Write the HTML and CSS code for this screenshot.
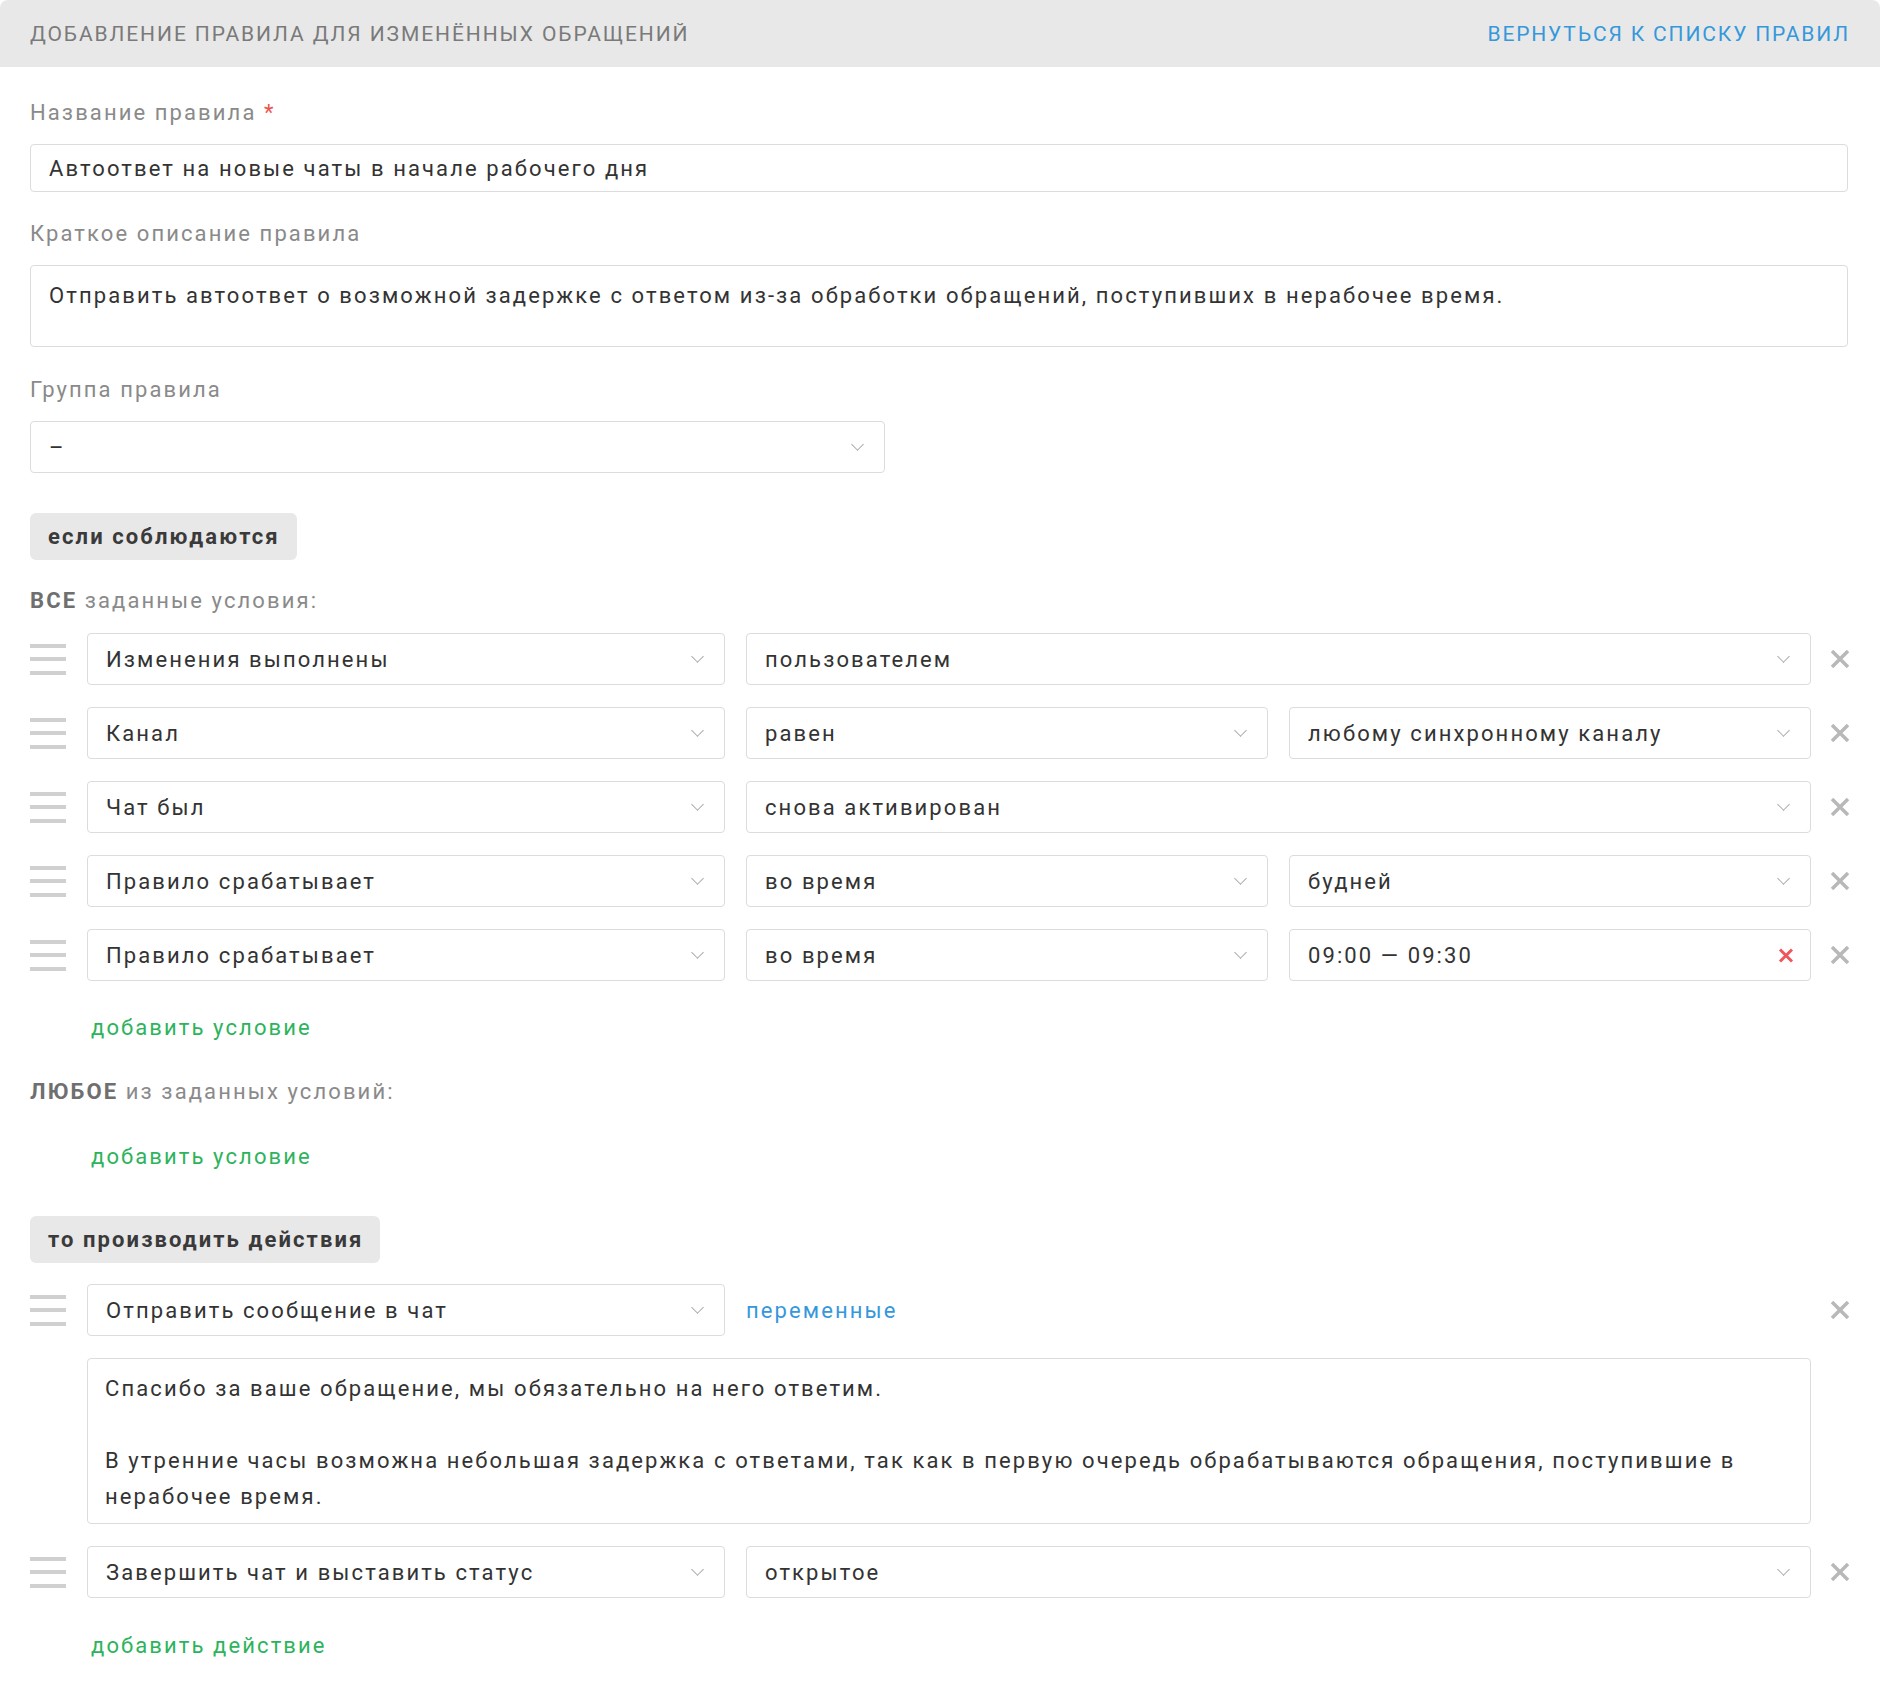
FILE: index.html
```html
<!DOCTYPE html>
<html lang="ru">
<head>
<meta charset="utf-8">
<title>Добавление правила</title>
<link rel="stylesheet" href="styles.css">
</head>
<body>
<div class="page">
  <div class="header">
    <div class="header-title">Добавление правила для изменённых обращений</div>
    <a class="header-link" href="#">Вернуться к списку правил</a>
  </div>
  <div class="content">
    <div class="label label-first">Название правила <span class="req">*</span></div>
    <div class="input">Автоответ на новые чаты в начале рабочего дня</div>

    <div class="label label-desc">Краткое описание правила</div>
    <div class="input textarea-desc">Отправить автоответ о возможной задержке с ответом из-за обработки обращений, поступивших в нерабочее время.</div>

    <div class="label label-group">Группа правила</div>
    <div class="select select-group"><span>–</span><i class="chev"></i></div>

    <div class="badge badge-if">если соблюдаются</div>

    <div class="cond-title cond-all"><b>ВСЕ</b> заданные условия:</div>

    <div class="rows">
      <div class="row">
        <div class="handle"><i></i><i></i><i></i></div>
        <div class="fields two">
          <div class="select"><span>Изменения выполнены</span><i class="chev"></i></div>
          <div class="select"><span>пользователем</span><i class="chev"></i></div>
        </div>
        <div class="remove"><svg viewBox="0 0 20 18" width="20" height="18"><path d="M2 1 L18 17 M18 1 L2 17"/></svg></div>
      </div>
      <div class="row">
        <div class="handle"><i></i><i></i><i></i></div>
        <div class="fields three">
          <div class="select"><span>Канал</span><i class="chev"></i></div>
          <div class="select"><span>равен</span><i class="chev"></i></div>
          <div class="select"><span>любому синхронному каналу</span><i class="chev"></i></div>
        </div>
        <div class="remove"><svg viewBox="0 0 20 18" width="20" height="18"><path d="M2 1 L18 17 M18 1 L2 17"/></svg></div>
      </div>
      <div class="row">
        <div class="handle"><i></i><i></i><i></i></div>
        <div class="fields two">
          <div class="select"><span>Чат был</span><i class="chev"></i></div>
          <div class="select"><span>снова активирован</span><i class="chev"></i></div>
        </div>
        <div class="remove"><svg viewBox="0 0 20 18" width="20" height="18"><path d="M2 1 L18 17 M18 1 L2 17"/></svg></div>
      </div>
      <div class="row">
        <div class="handle"><i></i><i></i><i></i></div>
        <div class="fields three">
          <div class="select"><span>Правило срабатывает</span><i class="chev"></i></div>
          <div class="select"><span>во время</span><i class="chev"></i></div>
          <div class="select"><span>будней</span><i class="chev"></i></div>
        </div>
        <div class="remove"><svg viewBox="0 0 20 18" width="20" height="18"><path d="M2 1 L18 17 M18 1 L2 17"/></svg></div>
      </div>
      <div class="row">
        <div class="handle"><i></i><i></i><i></i></div>
        <div class="fields three">
          <div class="select"><span>Правило срабатывает</span><i class="chev"></i></div>
          <div class="select"><span>во время</span><i class="chev"></i></div>
          <div class="select"><span>09:00 — 09:30</span><svg class="clear" viewBox="0 0 16 15" width="16" height="15"><path d="M2 1.5 L14 13.5 M14 1.5 L2 13.5"/></svg></div>
        </div>
        <div class="remove"><svg viewBox="0 0 20 18" width="20" height="18"><path d="M2 1 L18 17 M18 1 L2 17"/></svg></div>
      </div>
    </div>

    <a class="add-link add-cond-1" href="#">добавить условие</a>

    <div class="cond-title cond-any"><b>ЛЮБОЕ</b> из заданных условий:</div>

    <a class="add-link add-cond-2" href="#">добавить условие</a>

    <div class="badge badge-then">то производить действия</div>

    <div class="rows actions">
      <div class="row">
        <div class="handle"><i></i><i></i><i></i></div>
        <div class="fields two-link">
          <div class="select"><span>Отправить сообщение в чат</span><i class="chev"></i></div>
          <a class="vars" href="#">переменные</a>
        </div>
        <div class="remove"><svg viewBox="0 0 20 18" width="20" height="18"><path d="M2 1 L18 17 M18 1 L2 17"/></svg></div>
      </div>
      <div class="row row-msg">
        <div class="handle-space"></div>
        <div class="input textarea-msg">Спасибо за ваше обращение, мы обязательно на него ответим.<br><br>В утренние часы возможна небольшая задержка с ответами, так как в первую очередь обрабатываются обращения, поступившие в нерабочее время.</div>
        <div class="remove-space"></div>
      </div>
      <div class="row">
        <div class="handle"><i></i><i></i><i></i></div>
        <div class="fields two">
          <div class="select"><span>Завершить чат и выставить статус</span><i class="chev"></i></div>
          <div class="select"><span>открытое</span><i class="chev"></i></div>
        </div>
        <div class="remove"><svg viewBox="0 0 20 18" width="20" height="18"><path d="M2 1 L18 17 M18 1 L2 17"/></svg></div>
      </div>
    </div>

    <a class="add-link add-action" href="#">добавить действие</a>
  </div>
</div>
</body>
</html>
```

FILE: styles.css
```css
* { box-sizing: border-box; }

html, body {
  margin: 0;
  padding: 0;
  background: #ffffff;
}

body {
  font-family: Roboto, "Noto Sans", "Liberation Sans", sans-serif;
  color: #333333;
  font-size: 22px;
  letter-spacing: 2.1px;
}

.page {
  width: 1880px;
}

.header {
  height: 67px;
  background: #e8e8e8;
  border-radius: 8px 8px 0 0;
  display: flex;
  align-items: center;
  justify-content: space-between;
  padding: 0 32px 0 30px;
}

.header-title {
  text-transform: uppercase;
  color: #7a7a7a;
  font-size: 21px;
  letter-spacing: 1.9px;
}

.header-link {
  text-transform: uppercase;
  color: #3598db;
  font-size: 21px;
  letter-spacing: 1.85px;
  text-decoration: none;
  margin-right: -2px;
}

.content {
  padding: 0 32px 60px 30px;
}

.label {
  color: #8a8a8a;
  font-size: 22px;
  line-height: 30px;
  margin-bottom: 13px;
}

.label-first { margin-top: 31px; margin-bottom: 16px; }
.label-desc { margin-top: 27px; margin-bottom: 16px; }
.label-group { margin-top: 28px; margin-bottom: 16px; }

.req { color: #ef5350; }

.input {
  border: 1px solid #dcdcdc;
  border-radius: 4px;
  height: 48px;
  padding: 0 18px;
  display: flex;
  align-items: center;
  font-size: 22px;
  color: #333;
  background: #fff;
}

.textarea-desc {
  height: 82px;
  align-items: flex-start;
  padding-top: 15px;
  line-height: 30px;
}

.select {
  border: 1px solid #dcdcdc;
  border-radius: 4px;
  height: 52px;
  padding: 0 20px 0 18px;
  display: flex;
  align-items: center;
  justify-content: space-between;
  font-size: 22px;
  color: #333;
  background: #fff;
}

.select-group {
  width: 855px;
}

.chev {
  display: block;
  width: 9px;
  height: 9px;
  border-right: 1.3px solid #aaaaaa;
  border-bottom: 1.3px solid #aaaaaa;
  transform: translateY(-3px) rotate(45deg);
  margin-right: 2px;
  flex: none;
}

.clear {
  flex: none;
  margin-right: -4px;
}
.clear path {
  stroke: #f0575a;
  stroke-width: 3;
  fill: none;
}

.badge {
  display: inline-block;
  background: #e8e8e8;
  border-radius: 6px;
  font-weight: 700;
  color: #3a3a3a;
  font-size: 22px;
  line-height: 47px;
  height: 47px;
  padding: 0 17px 0 18px;
}

.badge-if { margin-top: 40px; }
.badge-then { margin-top: 44px; }

.cond-title {
  color: #8a8a8a;
  font-size: 22px;
  line-height: 30px;
}
.cond-title b {
  color: #6f6f6f;
  font-weight: 700;
}

.cond-all { margin-top: 26px; }
.cond-any { margin-top: 34px; }

.rows {
  display: flex;
  flex-direction: column;
  gap: 22px;
  margin-top: 17px;
}

.rows.actions { margin-top: 21px; }

.row {
  display: flex;
  align-items: center;
}

.handle {
  width: 57px;
  flex: none;
  display: flex;
  flex-direction: column;
  gap: 9.5px;
}
.handle i {
  display: block;
  width: 36px;
  height: 4px;
  background: #d0d0d0;
}

.handle-space { width: 57px; flex: none; }
.remove-space { width: 37px; flex: none; }

.fields {
  flex: 1;
  display: grid;
  column-gap: 21px;
}
.fields.two { grid-template-columns: 638px 1fr; }
.fields.three { grid-template-columns: 638px 1fr 1fr; }
.fields.two-link { grid-template-columns: 638px 1fr; align-items: center; }

.remove {
  width: 37px;
  flex: none;
  display: flex;
  justify-content: flex-end;
}
.remove svg {
  margin-right: -2px;
}
.remove svg path {
  stroke: #b8b8b8;
  stroke-width: 3.5;
  fill: none;
}

.vars {
  color: #3598db;
  text-decoration: none;
  font-size: 22px;
}

.textarea-msg {
  flex: 1;
  height: 166px;
  display: block;
  padding: 12px 18px 0 17px;
  line-height: 36px;
}

.add-link {
  display: block;
  color: #2db35c;
  text-decoration: none;
  font-size: 22px;
  line-height: 30px;
  margin-left: 61px;
  width: max-content;
}

.add-cond-1 { margin-top: 32px; }
.add-cond-2 { margin-top: 35px; }
.add-action { margin-top: 33px; }
```
